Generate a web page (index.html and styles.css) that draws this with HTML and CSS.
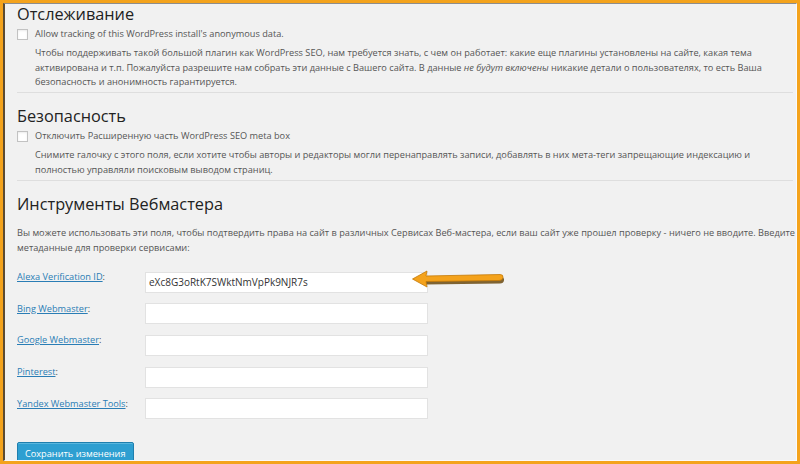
FILE: index.html
```html
<!DOCTYPE html>
<html lang="ru">
<head>
<meta charset="utf-8">
<title>WordPress SEO</title>
<link rel="stylesheet" href="styles.css">
</head>
<body>
<div class="frame">
  <div class="window">
    <section class="section">
      <h2 class="title">Отслеживание</h2>
      <label class="check-row"><span class="checkbox"></span><span>Allow tracking of this WordPress install's anonymous data.</span></label>
      <p class="desc">Чтобы поддерживать такой большой плагин как WordPress SEO, нам требуется знать, с чем он работает: какие еще плагины установлены на сайте, какая тема<br>активирована и т.п. Пожалуйста разрешите нам собрать эти данные с Вашего сайта. В данные <em>не будут включены</em> никакие детали о пользователях, то есть Ваша<br>безопасность и анонимность гарантируется.</p>
    </section>
    <section class="section">
      <h2 class="title">Безопасность</h2>
      <label class="check-row"><span class="checkbox"></span><span>Отключить Расширенную часть WordPress SEO meta box</span></label>
      <p class="desc">Снимите галочку с этого поля, если хотите чтобы авторы и редакторы могли перенаправлять записи, добавлять в них мета-теги запрещающие индексацию и<br>полностью управляли поисковым выводом страниц.</p>
    </section>
    <section class="section last">
      <h2 class="title">Инструменты Вебмастера</h2>
      <p class="intro">Вы можете использовать эти поля, чтобы подтвердить права на сайт в различных Сервисах Веб-мастера, если ваш сайт уже прошел проверку - ничего не вводите. Введите<br>метаданные для проверки сервисами:</p>
      <div class="form-grid">
        <div class="label"><a href="#">Alexa Verification ID</a>:</div>
        <div class="field"><input class="text" type="text" value="eXc8G3oRtK7SWktNmVpPk9NJR7s"><svg class="arrow" width="96" height="22" viewBox="0 0 96 22"><path d="M14 9 L90 7.5 Q93.5 7.5 93 11 Q92.5 14 89 14 L14 15 Z" fill="#6b4a10" opacity="0.85" transform="translate(0 1.5)"/><path d="M1.5 11 L16 3 L15 8 L89 6.5 Q92.5 6.5 92 9.5 Q91.5 12.5 88 12.5 L15 13.5 L16 19 Z" fill="#f4a21b" stroke="#c47a08" stroke-width="0.8" stroke-linejoin="round"/></svg></div>
        <div class="label"><a href="#">Bing Webmaster</a>:</div>
        <div class="field"><input class="text" type="text"></div>
        <div class="label"><a href="#">Google Webmaster</a>:</div>
        <div class="field"><input class="text" type="text"></div>
        <div class="label"><a href="#">Pinterest</a>:</div>
        <div class="field"><input class="text" type="text"></div>
        <div class="label"><a href="#">Yandex Webmaster Tools</a>:</div>
        <div class="field"><input class="text" type="text"></div>
      </div>
      <button class="button" type="button">Сохранить изменения</button>
    </section>
  </div>
</div>
</body>
</html>
```

FILE: styles.css
```css
html, body {
  margin: 0;
  padding: 0;
}
body {
  width: 800px;
  height: 464px;
  overflow: hidden;
  font-family: "Open Sans", "Noto Sans", sans-serif;
  font-size: 9.2px;
  color: #444;
  background: #f1f1f1;
}
.frame {
  box-sizing: border-box;
  width: 800px;
  height: 464px;
  border: 3px solid #f4a31c;
  overflow: hidden;
}
.window {
  box-sizing: border-box;
  height: 100%;
  border-top: 1px solid #8d8d8d;
  border-left: 2px solid #5c4b31;
  border-right: 1px solid #fafafa;
  border-bottom: 1px solid #fafafa;
  background: #f1f1f1;
  padding: 1px 3px 0 12px;
  overflow: hidden;
}
.section {
  border-bottom: 1px solid #dedede;
  padding-bottom: 2.5px;
  margin-bottom: 14.4px;
}
.section.last {
  border-bottom: 0;
}
.title {
  margin: 0;
  font-size: 16.3px;
  line-height: 18px;
  font-weight: 400;
  color: #222;
}
.check-row {
  display: flex;
  align-items: center;
  gap: 7px;
  margin-top: 3px;
  line-height: 15px;
  color: #555;
}
.checkbox {
  box-sizing: border-box;
  width: 11px;
  height: 11px;
  margin-top: 1px;
  background: #fff;
  border: 1px solid #c2c2c2;
  box-shadow: inset 0 1px 2px rgba(0,0,0,0.08);
}
.desc {
  margin: 5px 0 0 18px;
  line-height: 14.5px;
  color: #555;
  white-space: nowrap;
}
.desc em {
  font-style: italic;
}
.intro {
  margin: 12px 0 0;
  line-height: 15px;
  color: #555;
  white-space: nowrap;
}
.form-grid {
  display: grid;
  grid-template-columns: 128px 283px;
  row-gap: 8px;
  margin-top: 13.6px;
}
.label {
  line-height: 15px;
  color: #444;
}
.label a {
  color: #2a7db5;
  text-decoration: underline;
}
.field {
  position: relative;
  padding-top: 2.7px;
  height: 21px;
}
.text {
  display: block;
  box-sizing: border-box;
  width: 283px;
  height: 21px;
  margin: 0;
  padding: 0 3px;
  border: 1px solid #e2e2e2;
  background: #fff;
  font-family: "Open Sans", "Noto Sans", sans-serif;
  font-size: 10px;
  color: #333;
  outline: none;
}
.arrow {
  position: absolute;
  left: 266px;
  top: -1px;
}
.button {
  display: block;
  margin-top: 23px;
  height: 22px;
  padding: 0 7px;
  border: 1px solid #1f7fae;
  border-radius: 2px;
  background: #2e9fd1;
  box-shadow: inset 0 1px 0 rgba(120,200,230,0.6);
  color: #fff;
  font-family: "Open Sans", "Noto Sans", sans-serif;
  font-size: 9.2px;
  line-height: 17px;
}
```
